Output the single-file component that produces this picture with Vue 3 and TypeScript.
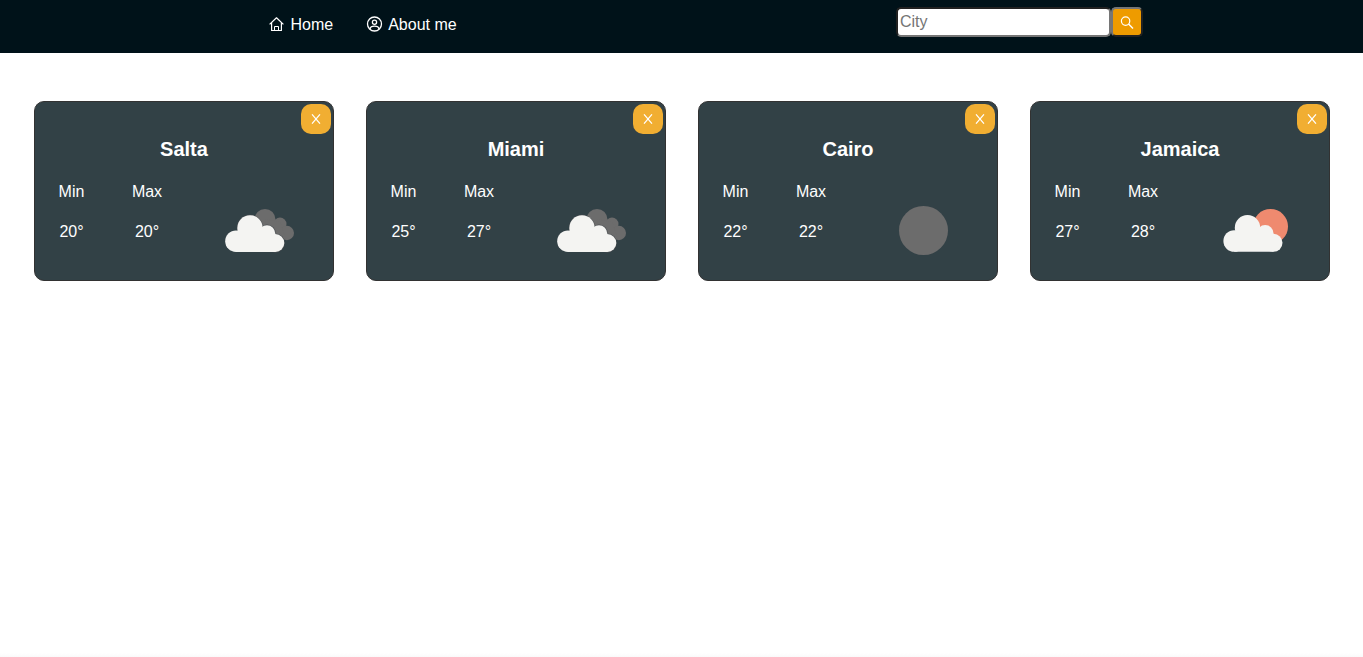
<script setup lang="ts">
import { ref } from 'vue'

type Sky = 'clouds' | 'night' | 'sun'

interface City {
  id: number
  name: string
  min: number
  max: number
  sky: Sky
}

const query = ref('')
const cities = ref<City[]>([
  { id: 1, name: 'Salta', min: 20, max: 20, sky: 'clouds' },
  { id: 2, name: 'Miami', min: 25, max: 27, sky: 'clouds' },
  { id: 3, name: 'Cairo', min: 22, max: 22, sky: 'night' },
  { id: 4, name: 'Jamaica', min: 27, max: 28, sky: 'sun' },
])

function closeCity(id: number): void {
  cities.value = cities.value.filter((c) => c.id !== id)
}
</script>

<template>
  <div class="page">
    <header class="bar">
      <nav class="links">
        <a class="link">
          <svg class="icon" width="17" height="17" viewBox="0 0 17 17" fill="none" stroke="currentColor" stroke-width="1.200">
            <path d="M1.600 9.400L8.500 2.800l6.900 6.600M3.600 7.500v8h9.800v-8" stroke-linejoin="round" />
            <path d="M6.500 15.500v-4h4v4" stroke-width="1" />
          </svg>
          <span>Home</span>
        </a>
        <a class="link">
          <svg class="icon" width="17" height="17" viewBox="0 0 17 17" fill="none" stroke="currentColor" stroke-width="1.300">
            <circle cx="8.500" cy="9" r="7" />
            <circle cx="8.500" cy="7.200" r="2.100" />
            <path d="M4 14.100C4.300 12 5.800 11.200 8.500 11.200s4.200.8 4.500 2.900" />
          </svg>
          <span>About me</span>
        </a>
      </nav>
      <form class="search" @submit.prevent>
        <input v-model="query" class="field" type="text" placeholder="City" />
        <button class="go" type="submit" aria-label="Search">
          <svg width="14" height="14" viewBox="0 0 14 14" fill="none" stroke="#fff" stroke-width="1.200">
            <circle cx="5.600" cy="6.100" r="4.200" />
            <path d="M8.600 9.100L13 13.500" stroke-width="1.400" />
          </svg>
        </button>
      </form>
    </header>

    <main class="cards">
      <article v-for="city in cities" :key="city.id" class="card">
        <button class="close" type="button" aria-label="Close" @click="closeCity(city.id)">
          <svg width="10" height="10" viewBox="0 0 10 10" stroke="#fff" stroke-width="1.150">
            <path d="M1 .3L9 9.700M9 .3L1 9.700" />
          </svg>
        </button>
        <h2 class="name">{{ city.name }}</h2>
        <div class="data">
          <div class="temp">
            <span>Min</span>
            <span>{{ city.min }}°</span>
          </div>
          <div class="temp">
            <span>Max</span>
            <span>{{ city.max }}°</span>
          </div>
          <svg class="sky" width="100" height="80" viewBox="0 0 100 80">
            <circle v-if="city.sky === 'night'" cx="50.500" cy="39.500" r="24.500" fill="#484848" />
            <template v-else>
              <g v-if="city.sky === 'clouds'" fill="#484848">
                <circle cx="56" cy="28.500" r="10.500" />
                <circle cx="71" cy="33" r="6.500" />
                <circle cx="77.800" cy="42" r="7.200" />
                <path d="M55 28L71 31 77 48H62Z" />
              </g>
              <circle v-else cx="65.500" cy="35.500" r="17.500" fill="#ec6e4c" />
              <g v-if="city.sky === 'clouds'" class="rim">
                <circle cx="41" cy="36.900" r="13.100" />
                <circle cx="58" cy="42.500" r="8.900" />
                <circle cx="66.300" cy="52" r="9.400" />
              </g>
              <g class="cloud" :transform="city.sky === 'sun' ? 'translate(2.200 -.2)' : undefined">
                <circle cx="27" cy="50.200" r="10.800" />
                <circle :cx="city.sky === 'sun' ? 40.3 : 41" cy="36.900" r="12.700" />
                <circle cx="58" cy="42.500" r="8.300" />
                <circle cx="66.300" cy="52" r="9" />
                <path d="M27 61V45L34 40H58L66.300 48V61Z" />
              </g>
            </template>
          </svg>
        </div>
      </article>
    </main>
  </div>
</template>

<style>
body {
  margin: 0;
  overflow: hidden;
}
</style>

<style scoped>
.page {
  box-sizing: border-box;
  height: 657px;
  background: linear-gradient(to top, #fafafa, #fff 4px);
  font: 16px/20px "Liberation Sans", Arial, sans-serif;
  color: #fff;
}
.bar {
  display: flex;
  justify-content: space-between;
  align-items: flex-start;
  box-sizing: border-box;
  height: 53px;
  padding: 7px 220px 0 268px;
  background: #001219;
}
.links {
  display: flex;
  gap: 33px;
  padding-top: 8px;
}
.link {
  display: flex;
  align-items: flex-start;
  gap: 5px;
}
.link:first-child {
  gap: 5.500px;
}
.icon {
  display: block;
}
.search {
  display: flex;
}
.field {
  box-sizing: border-box;
  width: 215px;
  height: 30px;
  padding: 1px 2px;
  border: 2px inset #767676;
  border-radius: 5px;
  background: #fff;
  font: inherit;
}
.field::placeholder {
  color: #757575;
}
.go {
  display: grid;
  place-items: center;
  box-sizing: border-box;
  width: 32px;
  height: 30px;
  padding: 0;
  border: 2px outset #767676;
  border-radius: 5px;
  background: #ee9b00;
}
.cards {
  display: flex;
  gap: 32px;
  padding: 48px 34px 0;
}
.card {
  position: relative;
  box-sizing: border-box;
  width: 300px;
  height: 180px;
  flex: none;
  border: 1px solid #000;
  border-radius: 10px;
  background: #001219;
  opacity: 0.8;
}
.close {
  position: absolute;
  top: 2px;
  right: 2px;
  display: grid;
  place-items: center;
  width: 30px;
  height: 30px;
  padding: 0;
  border: 0;
  border-radius: 10px;
  background: #ee9b00;
}
.name {
  margin: 35px 0 0;
  font-size: 20px;
  line-height: 24px;
  text-align: center;
}
.data {
  display: grid;
  grid-template-columns: 73px 78px 100px;
  margin-top: 21px;
}
.temp {
  display: flex;
  flex-direction: column;
  align-items: center;
  gap: 20px;
}
.sky {
  display: block;
  margin: 9px 0 0 23px;
}
.cloud {
  fill: #f2f2f0;
}
.rim {
  fill: #1d2327;
}
</style>
